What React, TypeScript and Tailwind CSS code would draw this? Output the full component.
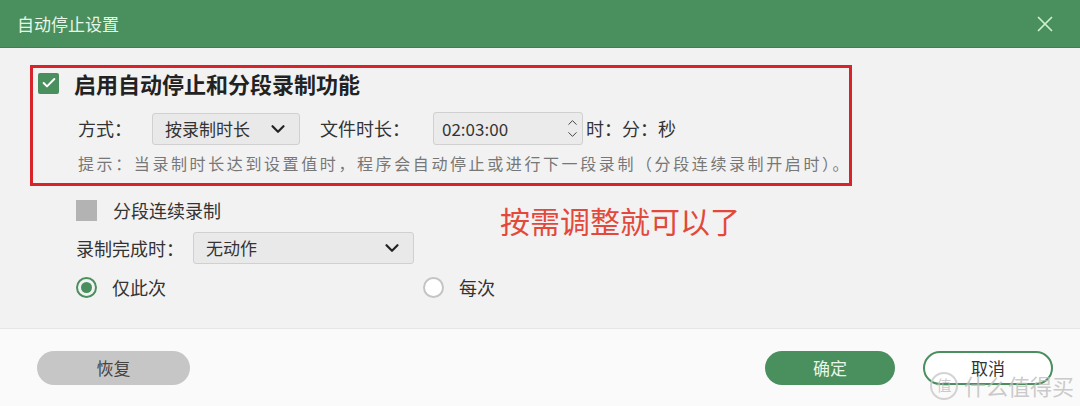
import React, { useState } from "react";
import { ChevronDown, ChevronUp, X, Check } from "lucide-react";

const font = { fontFamily: '"Noto Sans CJK SC", "Noto Sans", sans-serif' };

type SelectProps = { value: string; width: string };

// flat select box used for both dropdowns in the dialog
const SelectBox = ({ value, width }: SelectProps) => (
  <div
    className={`flex h-[32px] ${width} items-center justify-between rounded-[3px] border border-[#d0d0d0] bg-[#e9e9e9] pl-[12px] pr-[10px] text-[17px] text-[#333]`}
  >
    <span>{value}</span>
    <ChevronDown size={22} strokeWidth={2.4} className="text-[#222]" />
  </div>
);

const Radio = ({ checked, label }: { checked: boolean; label: string }) => (
  <div className="flex items-center gap-[15px]">
    <span
      className={`flex h-[21px] w-[21px] items-center justify-center rounded-full border-2 ${
        checked ? "border-[#4a8f5e]" : "border-[#c4c4c4] bg-white"
      }`}
    >
      {checked && <span className="h-[11px] w-[11px] rounded-full bg-[#4a8f5e]" />}
    </span>
    <span className="text-[18px] text-[#333]">{label}</span>
  </div>
);

export default function App() {
  const [enabled, setEnabled] = useState(true);

  return (
    <div className="relative flex h-[406px] w-[1080px] flex-col overflow-hidden bg-[#f2f2f2]" style={font}>
      {/* title bar */}
      <div className="flex h-[48px] shrink-0 items-center justify-between border-b border-[#3f7f52] bg-[#4a8f5e] pl-[17px] pr-[22px]">
        <span className="text-[17px] text-[#e8f6e8]">自动停止设置</span>
        <X size={26} strokeWidth={1.6} className="text-[#cdf0cd]" />
      </div>

      {/* settings */}
      <div className="relative flex-1">
        <div className="ml-[30px] mt-[17px] h-[121px] w-[822px] border-[3px] border-[#d9232a] pl-[5px] pt-[3px]">
          <div className="flex h-[24px] items-center gap-[15px]">
            <button
              onClick={() => setEnabled(!enabled)}
              className="flex h-[21px] w-[21px] items-center justify-center rounded-[2px] bg-[#4a8f5e]"
            >
              {enabled && <Check size={16} strokeWidth={3} className="text-white" />}
            </button>
            <span className="text-[22px] font-bold leading-none text-[#222]">启用自动停止和分段录制功能</span>
          </div>

          <div className="mt-[17px] flex items-center pl-[40px] text-[18px] text-[#333]">
            <span className="w-[74px]">方式：</span>
            <SelectBox value="按录制时长" width="w-[148px]" />
            <span className="ml-[20px] w-[113px]">文件时长：</span>
            <div className="flex h-[33px] w-[150px] items-center justify-between rounded-[3px] border border-[#d0d0d0] bg-[#ebebeb] pl-[8px] pr-[2px] text-[17px]">
              <span>02:03:00</span>
              <div className="flex flex-col items-center leading-none text-[#444]">
                <ChevronUp size={15} strokeWidth={1.6} />
                <ChevronDown size={15} strokeWidth={1.6} className="-mt-[3px]" />
              </div>
            </div>
            <span className="ml-[3px]">时：分：秒</span>
          </div>

          <div className="mt-[6px] whitespace-nowrap pl-[40px] text-[16px] tracking-[2.6px] text-[#777]">
            提示：当录制时长达到设置值时，程序会自动停止或进行下一段录制（分段连续录制开启时）。
          </div>
        </div>

        <div className="ml-[76px] mt-[11px] flex items-center gap-[16px]">
          <span className="h-[21px] w-[21px] bg-[#b3b3b3]" />
          <span className="text-[18px] text-[#333]">分段连续录制</span>
        </div>

        <div className="ml-[76px] mt-[8px] flex items-center text-[18px] text-[#333]">
          <span className="w-[117px]">录制完成时：</span>
          <SelectBox value="无动作" width="w-[221px]" />
        </div>

        <div className="ml-[76px] mt-[10px] flex items-center">
          <div className="w-[347px]">
            <Radio checked label="仅此次" />
          </div>
          <Radio checked={false} label="每次" />
        </div>

        {/* annotation over the form */}
        <span className="absolute left-[500px] top-[150px] text-[30px] text-[#e2493b]">按需调整就可以了</span>
      </div>

      {/* footer */}
      <div className="flex h-[78px] shrink-0 items-center justify-between border-t border-[#e6e6e6] bg-[#fafafa] pl-[37px] pr-[27px]">
        <button className="h-[34px] w-[153px] rounded-full bg-[#c6c6c6] text-[17px] text-[#444]">恢复</button>
        <div className="flex gap-[28px]">
          <button className="h-[34px] w-[130px] rounded-full bg-[#4a8f5e] text-[17px] text-[#e8f6e8]">确定</button>
          <button className="h-[34px] w-[130px] rounded-full border-2 border-[#4a8f5e] bg-white text-[17px] text-[#333]">
            取消
          </button>
        </div>
      </div>

      {/* site watermark */}
      <div className="absolute bottom-[4px] right-[6px] flex items-center gap-[6px] text-[22px] text-[#bdbdbd]/80">
        <span className="flex h-[28px] w-[28px] items-center justify-center rounded-full border-2 border-[#c8c8c8]/80 text-[15px]">
          值
        </span>
        <span>什么值得买</span>
      </div>
    </div>
  );
}
